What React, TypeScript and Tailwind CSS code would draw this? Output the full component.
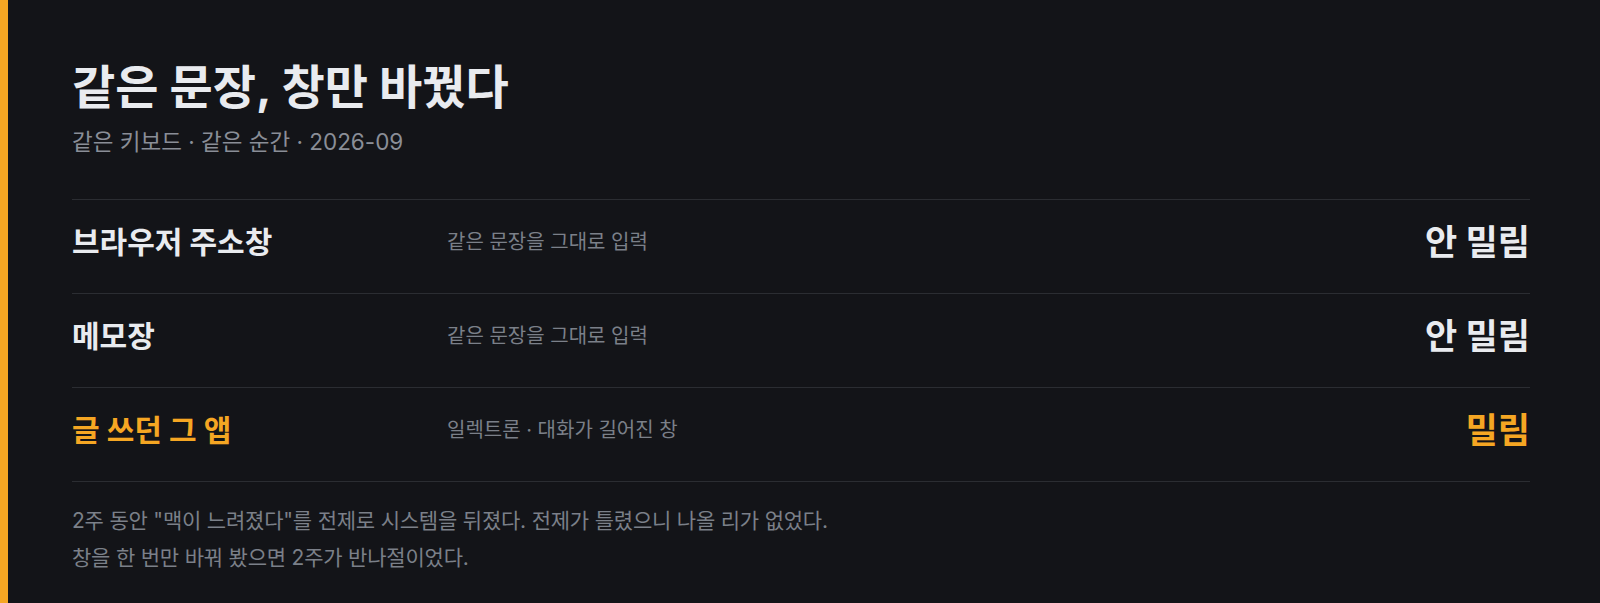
const rows = [
  { label: "브라우저 주소창", desc: "같은 문장을 그대로 입력", value: "안 밀림", hot: false },
  { label: "메모장", desc: "같은 문장을 그대로 입력", value: "안 밀림", hot: false },
  { label: "글 쓰던 그 앱", desc: "일렉트론 · 대화가 길어진 창", value: "밀림", hot: true },
];

export default function App() {
  return (
    <div className="min-h-[603px] border-l-8 border-[#f5a623] bg-[#131418] pl-16 pr-[70px] pt-[55px] font-['Inter','Noto_Sans_CJK_KR','Noto_Sans',sans-serif]">
      <h1 className="text-[47px] font-bold leading-[64px] text-[#e9ebef]">
        같은 문장, 창만 바꿨다
      </h1>
      <p className="mt-[7px] text-[22.5px] leading-[32px] text-[#8a8e97]">
        같은 키보드 · 같은 순간 · 2026-09
      </p>

      <div className="mt-[41px] border-t border-[#2b2d32]">
        {rows.map((r) => (
          <div
            key={r.label}
            className="flex h-[94px] items-center border-b border-[#2b2d32] pb-[9px]"
          >
            <span
              className={`w-[375px] shrink-0 text-[30px] font-bold ${
                r.hot ? "text-[#f5a623]" : "text-[#e9ebef]"
              }`}
            >
              {r.label}
            </span>
            <span className="flex-1 text-[20px] text-[#7b8089]">{r.desc}</span>
            <span
              className={`text-[35px] font-bold ${
                r.hot ? "text-[#f5a623]" : "text-[#e9ebef]"
              }`}
            >
              {r.value}
            </span>
          </div>
        ))}
      </div>

      <div className="pt-[20px] text-[21px] leading-[37px] tracking-[-0.01em] text-[#7b8089]">
        <p>2주 동안 "맥이 느려졌다"를 전제로 시스템을 뒤졌다. 전제가 틀렸으니 나올 리가 없었다.</p>
        <p>창을 한 번만 바꿔 봤으면 2주가 반나절이었다.</p>
      </div>
    </div>
  );
}
